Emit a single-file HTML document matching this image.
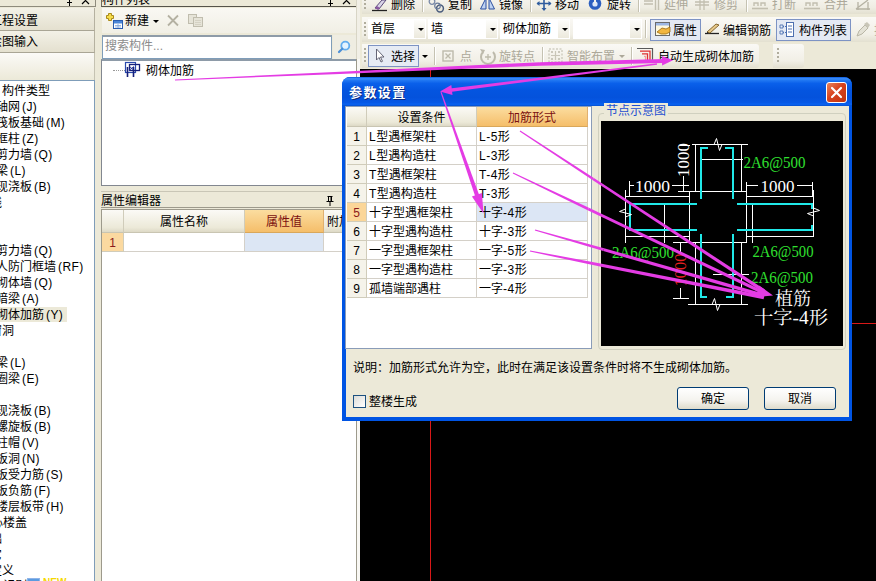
<!DOCTYPE html>
<html lang="zh-CN">
<head>
<meta charset="utf-8">
<title>参数设置</title>
<style>
html,body{margin:0;padding:0;}
body{width:876px;height:581px;overflow:hidden;position:relative;background:#ECE9D8;
 font-family:"Liberation Sans","Noto Sans CJK SC",sans-serif;font-size:12px;color:#000;line-height:16px;}
.a{position:absolute;box-sizing:border-box;white-space:nowrap;}
.t{position:absolute;white-space:nowrap;height:16px;line-height:16px;}
.g{color:#ACA899;}
/* left panel */
#lp-btn1,#lp-btn2{left:0;width:95px;background:linear-gradient(#F3F1E7,#E4E0CF);border-bottom:1px solid #A9A595;border-right:1px solid #B5B1A0;}
#tree .t{left:0;}
/* table cells */
.hd{background:linear-gradient(#FBFAF6,#ECE9D8 80%,#DDD9C6);border-right:1px solid #D0CCBA;border-bottom:1px solid #C9C5B2;text-align:center;}
.ho{background:linear-gradient(#FBDDA0,#F5BE6A);color:#7B1010;text-align:center;border-right:1px solid #E0B070;border-bottom:1px solid #D9A75A;}
.cell{border-right:1px solid #D4D0C8;border-bottom:1px solid #D4D0C8;background:#fff;padding-left:2px;line-height:20px;}
.rn{border-right:1px solid #D0CCBA;border-bottom:1px solid #D0CCBA;background:#F5F3EA;text-align:center;line-height:20px;}
.p{margin-left:2px;letter-spacing:0.4px;}
.m{letter-spacing:0.5px;}
.tb{position:absolute;white-space:nowrap;height:16px;line-height:16px;}
</style>
</head>
<body>

<!-- ================= LEFT PANEL ================= -->
<div class="a" id="lp-top" style="left:0;top:0;width:96px;height:7px;border-bottom:1px solid #8E8B7C;border-right:1px solid #8E8B7C;"></div>
<svg class="a" style="left:62px;top:0;" width="32" height="7"><path d="M7.500 0v3M5 2.500h5M7.500 3v3" stroke="#000" fill="none"/><path d="M20 -3l7 7M27 -3l-7 7" stroke="#000" stroke-width="1.200" fill="none"/></svg>
<div class="a" id="lp-btn1" style="top:8px;height:23px;"><span class="t" style="left:-10px;top:5px;">工程设置</span></div>
<div class="a" id="lp-btn2" style="top:31px;height:22px;"><span class="t" style="left:-10px;top:3px;">绘图输入</span></div>
<div class="a" id="lp-bar" style="left:0;top:53px;width:95px;height:27px;background:linear-gradient(#FBFAF7,#ECE9D8);border-right:1px solid #C5C2B2;"></div>
<div class="a" id="tree" style="left:-1px;top:80px;width:96px;height:510px;background:#fff;border:1px solid #7F9DB9;overflow:hidden;"><div class="a" style="left:0;top:2px;width:96px;height:520px;">
<span class="t" style="left:2px;top:0px;">构件类型</span>
<span class="t" style="left:-4px;top:16px;">轴网<span class="p">(J)</span></span>
<span class="t" style="left:-4px;top:32px;">筏板基础<span class="p">(M)</span></span>
<span class="t" style="left:-4px;top:48px;">框柱<span class="p">(Z)</span></span>
<span class="t" style="left:-4px;top:64px;">剪力墙<span class="p">(Q)</span></span>
<span class="t" style="left:-4px;top:80px;">梁<span class="p">(L)</span></span>
<span class="t" style="left:-4px;top:96px;">现浇板<span class="p">(B)</span></span>
<span class="t" style="left:-22px;top:112px;">轴线</span>
<span class="t" style="left:-4px;top:160px;">剪力墙<span class="p">(Q)</span></span>
<span class="t" style="left:-4px;top:176px;">人防门框墙<span class="p">(RF)</span></span>
<span class="t" style="left:-4px;top:192px;">砌体墙<span class="p">(Q)</span></span>
<span class="t" style="left:-4px;top:208px;">暗梁<span class="p">(A)</span></span>
<div class="a" style="left:0;top:224px;width:67px;height:15px;background:#ECE9D8;"></div>
<span class="t" style="left:-4px;top:224px;">砌体加筋<span class="p">(Y)</span></span>
<span class="t" style="left:-22px;top:240px;">门窗洞</span>
<span class="t" style="left:-4px;top:272px;">梁<span class="p">(L)</span></span>
<span class="t" style="left:-4px;top:288px;">圈梁<span class="p">(E)</span></span>
<span class="t" style="left:-4px;top:320px;">现浇板<span class="p">(B)</span></span>
<span class="t" style="left:-4px;top:336px;">螺旋板<span class="p">(B)</span></span>
<span class="t" style="left:-4px;top:352px;">柱帽<span class="p">(V)</span></span>
<span class="t" style="left:-4px;top:368px;">板洞<span class="p">(N)</span></span>
<span class="t" style="left:-4px;top:384px;">板受力筋<span class="p">(S)</span></span>
<span class="t" style="left:-4px;top:400px;">板负筋<span class="p">(F)</span></span>
<span class="t" style="left:-4px;top:416px;">楼层板带<span class="p">(H)</span></span>
<span class="t" style="left:-21px;top:432px;">空心楼盖</span>
<span class="t" style="left:-22px;top:448px;">基础</span>
<span class="t" style="left:-22px;top:464px;">其它</span>
<span class="t" style="left:-22px;top:480px;">自定义</span>
<span class="t" style="left:-22px;top:495px;">CAD识别</span>
<div class="a" style="left:27px;top:495px;width:13px;height:12px;background:#5B9BE0;border:1px solid #8FB4E8;"></div>
<span class="t" style="left:43px;top:492px;font-size:10px;font-weight:bold;color:#F5D800;">NEW</span>
</div></div>

<!-- ================= MIDDLE PANEL ================= -->
<div class="a" id="mp" style="left:100px;top:0;width:258px;height:581px;">
 <!-- title strip -->
 <div class="a" style="left:1px;top:-10px;width:256px;height:17px;border:1px solid #6E6C60;border-bottom:1px solid #55534A;"></div>
 <span class="t" style="left:2px;top:-8px;">构件列表</span>
 <svg class="a" style="left:226px;top:0;" width="30" height="7"><path d="M4.5 0v4M2 3.5h5M4.5 4v2" stroke="#000" fill="none"/><path d="M17 -3l7 7M24 -3l-7 7" stroke="#000" stroke-width="1.2" fill="none"/></svg>
 <!-- toolbar -->
 <div class="a" style="left:2px;top:8px;width:255px;height:25px;background:linear-gradient(#F9F8F3,#F1EFE5);"></div>
 <svg class="a" style="left:5px;top:12px;" width="18" height="17">
  <path d="M3.5 1.5h3v2h2v3h-2v2h-3v-2h-2v-3h2z" fill="#F6DC4A" stroke="#A88A1C" stroke-width="1"/>
  <rect x="8.5" y="8.5" width="9" height="8" fill="#fff" stroke="#2A5DB0"/><rect x="9" y="9" width="8" height="2.5" fill="#4A86D8"/>
  <path d="M10 13.5h6M10 15h6M13 12v4" stroke="#7FA6DD" stroke-width="0.8"/>
 </svg>
 <span class="t" style="left:25px;top:13px;">新建</span>
 <svg class="a" style="left:53px;top:20px;" width="6" height="3"><path d="M0 0h6L3 3z" fill="#000"/></svg>
 <svg class="a" style="left:66px;top:14px;" width="14" height="14"><path d="M2 1.500l10 10M12 1.500l-10 10" stroke="#B4B1A2" stroke-width="1.800" fill="none"/></svg>
 <svg class="a" style="left:87px;top:13px;" width="17" height="15"><rect x="1.5" y="1.5" width="8" height="9" fill="#E6E4D8" stroke="#C0BDAE"/><rect x="6.5" y="4.5" width="9" height="9" fill="#E6E4D8" stroke="#C0BDAE"/><path d="M8 7.5h6M8 9.5h6M8 11.5h6" stroke="#CFCCBE" stroke-width="0.8"/></svg>
 <!-- search -->
 <div class="a" style="left:2px;top:35px;width:230px;height:24px;background:#fff;border:1px solid #7F9DB9;border-top:2px solid #8E9BA8;"></div>
 <span class="t" style="left:5px;top:38px;color:#8C8C8C;">搜索构件...</span>
 <div class="a" style="left:233px;top:35px;width:23px;height:24px;background:#EFEDE2;"></div>
 <svg class="a" style="left:236px;top:38px;" width="18" height="18"><circle cx="9.300" cy="7.700" r="4" fill="#E4F3FF" stroke="#62ACEE" stroke-width="1.800"/><path d="M6.300 10.700l-3.300 3.300" stroke="#4C8FD6" stroke-width="2.200" stroke-linecap="round"/></svg>
 <!-- list -->
 <div class="a" style="left:1px;top:59px;width:257px;height:127px;background:#fff;border:1px solid #828790;border-top:2px solid #8E9BA8;"></div>
 <div class="a" style="left:13px;top:70px;width:12px;height:0;border-top:1px dotted #9A9A9A;"></div>
 <svg class="a" style="left:24px;top:61px;" width="18" height="18">
  <rect x="1.500" y="1.500" width="10" height="10" fill="none" stroke="#2A4AAE" stroke-width="1.200"/>
  <rect x="5.500" y="3.500" width="10" height="6" fill="none" stroke="#16207A" stroke-width="1.300"/>
  <path d="M3.500 6v10M9.500 6v10" stroke="#16207A" stroke-width="1.600" fill="none"/>
  <path d="M5 9.500l5-4M5.500 5.500l3.500 3" stroke="#2A3A9A" stroke-width="1" fill="none"/>
 </svg>
 <span class="t" style="left:46px;top:63px;">砌体加筋</span>
 <!-- property editor title -->
 <span class="t" style="left:1px;top:193px;">属性编辑器</span>
 <svg class="a" style="left:225px;top:195px;" width="10" height="12"><path d="M2.5 1.5h5M3.5 1.5v5M6.5 1.5v5M1.5 6.5h7M5 7v4" stroke="#000" fill="none"/><rect x="5.5" y="2" width="1" height="4" fill="#000"/></svg>
 <div class="a" style="left:1px;top:191px;width:257px;height:1px;background:#C9C6B6;"></div>
 <div class="a" style="left:1px;top:207px;width:257px;height:1px;background:#9D9A8C;"></div>
 <!-- property table -->
 <div class="a" style="left:1px;top:209px;width:257px;height:380px;background:#fff;border:1px solid #9D9A8C;"></div>
 <div class="a hd" style="left:2px;top:210px;width:22px;height:23px;"></div>
 <div class="a hd" style="left:24px;top:210px;width:121px;height:23px;line-height:25px;">属性名称</div>
 <div class="a ho" style="left:145px;top:210px;width:79px;height:23px;line-height:25px;">属性值</div>
 <div class="a hd" style="left:224px;top:210px;width:40px;height:23px;line-height:25px;text-align:left;padding-left:3px;">附加</div>
 <div class="a rn" style="left:2px;top:233px;width:22px;height:19px;background:#FBD9A0;color:#8B1A1A;">1</div>
 <div class="a cell" style="left:24px;top:233px;width:121px;height:19px;"></div>
 <div class="a cell" style="left:145px;top:233px;width:79px;height:19px;background:#DCE6F4;"></div>
 <div class="a cell" style="left:224px;top:233px;width:40px;height:19px;"></div>
</div>
<div class="a" style="left:356px;top:0;width:4px;height:69px;background:#F1EFE6;border-left:1px solid #D8D5C6;"></div>
<div class="a" style="left:356px;top:59px;width:4px;height:522px;background:#F8F7F3;border-left:1px solid #9D9A8C;"></div>

<!-- ================= RIGHT AREA ================= -->
<!-- toolbars -->
<div class="a" style="left:362px;top:-8px;width:514px;height:22px;background:linear-gradient(#FAF9F5,#EFEDE3 70%,#E3E0D0);"></div>
<div class="a" style="left:362px;top:17px;width:514px;height:25px;background:linear-gradient(#FAF9F5,#F1EFE6 70%,#E3E0D0);"></div>
<div class="a" style="left:362px;top:44px;width:397px;height:24px;background:linear-gradient(#FAF9F5,#F1EFE6 70%,#E3E0D0);border-radius:0 3px 3px 0;"></div>
<div class="a" style="left:773px;top:44px;width:31px;height:24px;background:linear-gradient(#FAF9F5,#F1EFE6 70%,#E3E0D0);border-radius:0 3px 3px 0;"></div>
<span class="t " style="left:391px;top:-3px;">删除</span>
<span class="t " style="left:448px;top:-3px;">复制</span>
<span class="t " style="left:499px;top:-3px;">镜像</span>
<span class="t " style="left:555px;top:-3px;">移动</span>
<span class="t " style="left:607px;top:-3px;">旋转</span>
<span class="t g" style="left:664px;top:-3px;">延伸</span>
<span class="t g" style="left:714px;top:-3px;">修剪</span>
<span class="t g" style="left:772px;top:-3px;">打断</span>
<span class="t g" style="left:824px;top:-3px;">合并</span>
<div class="a" style="left:422px;top:-4px;width:1px;height:16px;background:#C5C2B2;box-shadow:1px 0 0 #fff;"></div>
<div class="a" style="left:530px;top:-4px;width:1px;height:16px;background:#C5C2B2;box-shadow:1px 0 0 #fff;"></div>
<div class="a" style="left:638px;top:-4px;width:1px;height:16px;background:#C5C2B2;box-shadow:1px 0 0 #fff;"></div>
<div class="a" style="left:746px;top:-4px;width:1px;height:16px;background:#C5C2B2;box-shadow:1px 0 0 #fff;"></div>
<svg class="a" style="left:370px;top:0;" width="18" height="12"><path d="M2 10.5h15" stroke="#222" stroke-width="1.3"/><path d="M5 8l7-8h4l-7 9z" fill="#D9D4E8" stroke="#5A4A7A"/><path d="M5 8l2-2 3 2-2 2z" fill="#8A5AA0"/></svg>
<svg class="a" style="left:427px;top:0;" width="19" height="14"><circle cx="5" cy="1.500" r="2.800" fill="none" stroke="#7A8AA8" stroke-width="1.300"/><circle cx="13" cy="8.500" r="3.400" fill="none" stroke="#4A5C7C" stroke-width="1.500"/><circle cx="10.500" cy="6" r="2.800" fill="none" stroke="#6A7C9C" stroke-width="1.200"/></svg>
<svg class="a" style="left:479px;top:0;" width="18" height="12"><path d="M7 -2v11H1.5z" fill="#BFD3F2" stroke="#2B4FA0"/><path d="M10 -2v11h5.5z" fill="#BFD3F2" stroke="#2B4FA0"/></svg>
<svg class="a" style="left:536px;top:0;" width="16" height="12"><path d="M8 -3v13M1 3.5h14" stroke="#2F5C9E" stroke-width="1.6"/><path d="M8 11l-2.5-3h5zM0.500 3.500l3-2.500v5zM15.500 3.500l-3-2.500v5z" fill="#2F5C9E"/></svg>
<svg class="a" style="left:588px;top:0;" width="15" height="12"><circle cx="7" cy="3.500" r="6.300" fill="#2C5FC0"/><circle cx="7" cy="4" r="2.600" fill="#DCE8FA"/><rect x="6" y="-3" width="2" height="6" fill="#F4F2EA"/></svg>
<svg class="a" style="left:643px;top:0;" width="18" height="12"><path d="M1 1h9M1 4h9" stroke="#C2BFB0" stroke-width="1.4"/><path d="M12.500 -2v12M15.500 -2v12" stroke="#C2BFB0" stroke-width="1.4"/></svg>
<svg class="a" style="left:695px;top:0;" width="16" height="12"><path d="M5 -2v12M9 -2v12M0 2h14M0 5h14" stroke="#C2BFB0" stroke-width="1.3"/></svg>
<svg class="a" style="left:751px;top:0;" width="18" height="12"><path d="M1 8.500h16" stroke="#C2BFB0" stroke-width="1.6"/><path d="M3 6v-3h4v3M10 6v-3h4v3" stroke="#C2BFB0" stroke-width="1.4" fill="none"/></svg>
<svg class="a" style="left:803px;top:0;" width="18" height="12"><path d="M1 8.500h16" stroke="#C2BFB0" stroke-width="1.6"/><path d="M3 6v-3h4v3M10 6v-3h4v3" stroke="#C2BFB0" stroke-width="1.4" fill="none"/></svg>
<svg class="a" style="left:854px;top:0;" width="22" height="12"><path d="M2 9l12-9M2 9h14M4 2v8M14 2v8" stroke="#B5B2A3" stroke-width="1.3" fill="none"/></svg>
<div class="a" style="left:364px;top:-5px;width:2px;height:16px;background:repeating-linear-gradient(#B0AD9D 0 2px,transparent 2px 4px);"></div>
<div class="a" style="left:364px;top:22px;width:2px;height:16px;background:repeating-linear-gradient(#B0AD9D 0 2px,transparent 2px 4px);"></div>
<div class="a" style="left:364px;top:48px;width:2px;height:16px;background:repeating-linear-gradient(#B0AD9D 0 2px,transparent 2px 4px);"></div>
<div class="a" style="left:777px;top:48px;width:2px;height:16px;background:repeating-linear-gradient(#B0AD9D 0 2px,transparent 2px 4px);"></div>
<div class="a" style="left:368px;top:19px;width:58px;height:20px;background:#fff;"></div>
<div class="a" style="left:414px;top:20px;width:11px;height:18px;background:linear-gradient(#FDFDFB,#ECE9DC);"></div>
<span class="t" style="left:371px;top:21px;">首层</span>
<svg class="a" style="left:418px;top:28px;" width="6" height="3"><path d="M0 0h6L3 3z" fill="#000"/></svg>
<div class="a" style="left:428px;top:19px;width:70px;height:20px;background:#fff;"></div>
<div class="a" style="left:486px;top:20px;width:11px;height:18px;background:linear-gradient(#FDFDFB,#ECE9DC);"></div>
<span class="t" style="left:431px;top:21px;">墙</span>
<svg class="a" style="left:490px;top:28px;" width="6" height="3"><path d="M0 0h6L3 3z" fill="#000"/></svg>
<div class="a" style="left:500px;top:19px;width:70px;height:20px;background:#fff;"></div>
<div class="a" style="left:558px;top:20px;width:11px;height:18px;background:linear-gradient(#FDFDFB,#ECE9DC);"></div>
<span class="t" style="left:503px;top:21px;">砌体加筋</span>
<svg class="a" style="left:562px;top:28px;" width="6" height="3"><path d="M0 0h6L3 3z" fill="#000"/></svg>
<div class="a" style="left:573px;top:19px;width:69px;height:20px;background:#fff;"></div>
<div class="a" style="left:630px;top:20px;width:11px;height:18px;background:linear-gradient(#FDFDFB,#ECE9DC);"></div>
<svg class="a" style="left:634px;top:28px;" width="6" height="3"><path d="M0 0h6L3 3z" fill="#000"/></svg>
<div class="a" style="left:645px;top:20px;width:1px;height:18px;background:#C5C2B2;box-shadow:1px 0 0 #fff;"></div>
<div class="a" style="left:650px;top:19px;width:51px;height:22px;background:#E4E9F3;border:1px solid #7D93C4;"></div>
<svg class="a" style="left:654px;top:21px;" width="18" height="17"><rect x="1.500" y="1.500" width="14" height="13" fill="#FFF8DC" stroke="#6B6B6B"/><rect x="2" y="2" width="13" height="2.500" fill="#9DB7E4"/><path d="M3 11l5-4 4 1 4-2v5l-4 2-5 0z" fill="#F2B640" stroke="#9A6A10" stroke-width="0.800"/></svg>
<span class="t" style="left:673px;top:23px;">属性</span>
<svg class="a" style="left:704px;top:21px;" width="18" height="17"><path d="M1 12.500h14" stroke="#222" stroke-width="1.300"/><path d="M3 11l9-8 3 1-9 8z" fill="#E7C98A" stroke="#7A5A20" stroke-width="0.900"/><path d="M3 11l2 2" stroke="#333"/></svg>
<span class="t" style="left:723px;top:23px;">编辑钢筋</span>
<div class="a" style="left:776px;top:19px;width:75px;height:22px;background:#E4E9F3;border:1px solid #7D93C4;"></div>
<svg class="a" style="left:779px;top:21px;" width="17" height="17"><rect x="7.500" y="1.500" width="7" height="14" fill="#fff" stroke="#4D6FB0"/><path d="M9 5h4M9 8h4M9 11h4" stroke="#4D6FB0"/><path d="M1 4h3v3h-3zM1 10h3v3h-3z" fill="#E9EEF8" stroke="#4D6FB0" stroke-width="0.900"/><path d="M4 5.500h3M4 11.500h3" stroke="#4D6FB0" stroke-dasharray="1 1"/></svg>
<span class="t" style="left:799px;top:23px;">构件列表</span>
<svg class="a" style="left:855px;top:21px;" width="16" height="17"><path d="M2 15l2-5 6-6 3 3-6 6z" fill="#E4E2D6" stroke="#B9B6A6"/><path d="M9 3l3-2 3 3-2 3z" fill="#C9C6B8"/></svg>
<span class="t g" style="left:874px;top:23px;">拾取</span>
<div class="a" style="left:368px;top:45px;width:51px;height:22px;background:#E6EBF4;border:1px solid #7D93C4;"></div>
<svg class="a" style="left:375px;top:48px;" width="10" height="16"><path d="M1.500 1v11l2.500-2.500 2 4.500 1.500-0.700-2-4.300h3.500z" fill="#fff" stroke="#556" stroke-width="0.900"/></svg>
<span class="t" style="left:391px;top:49px;">选择</span>
<svg class="a" style="left:422px;top:55px;" width="6" height="3"><path d="M0 0h6L3 3z" fill="#000"/></svg>
<div class="a" style="left:434px;top:47px;width:1px;height:18px;background:#C5C2B2;box-shadow:1px 0 0 #fff;"></div>
<svg class="a" style="left:442px;top:50px;" width="12" height="12"><rect x="1" y="1" width="10" height="10" fill="none" stroke="#BDBAAB" stroke-width="1.400"/><path d="M3.500 3.500l5 5M8.500 3.500l-5 5" stroke="#BDBAAB" stroke-width="1.300"/></svg>
<span class="t g" style="left:460px;top:49px;">点</span>
<svg class="a" style="left:479px;top:47px;" width="18" height="18"><path d="M4 5a7 7 0 1 0 10 0" fill="none" stroke="#BDBAAB" stroke-width="2"/><path d="M1 2l5 1-2 4z" fill="#BDBAAB"/><path d="M9 7v6M6 10h6" stroke="#BDBAAB" stroke-width="1.300"/></svg>
<span class="t g" style="left:499px;top:49px;">旋转点</span>
<div class="a" style="left:542px;top:47px;width:1px;height:18px;background:#C5C2B2;box-shadow:1px 0 0 #fff;"></div>
<svg class="a" style="left:548px;top:48px;" width="16" height="16"><rect x="1" y="1" width="13" height="13" fill="none" stroke="#BDBAAB" stroke-dasharray="2 1.500"/><path d="M7.500 3v9M3 7.500h9" stroke="#C9C6B8" stroke-width="1.200"/><circle cx="4" cy="4" r="1" fill="#BDBAAB"/><circle cx="11" cy="4" r="1" fill="#BDBAAB"/><circle cx="4" cy="11" r="1" fill="#BDBAAB"/><circle cx="11" cy="11" r="1" fill="#BDBAAB"/></svg>
<span class="t g" style="left:567px;top:49px;">智能布置</span>
<svg class="a" style="left:619px;top:55px;" width="6" height="3"><path d="M0 0h6L3 3z" fill="#ACA899"/></svg>
<div class="a" style="left:631px;top:47px;width:1px;height:18px;background:#C5C2B2;box-shadow:1px 0 0 #fff;"></div>
<svg class="a" style="left:637px;top:47px;" width="18" height="16"><path d="M0 1.500h15.500v12" fill="none" stroke="#5A5A5A" stroke-width="1.200"/><path d="M3 4.200h10v9.500" fill="none" stroke="#E03030" stroke-width="1.300"/><path d="M5 6.800h5.500v7" fill="none" stroke="#E03030" stroke-width="1.300"/><path d="M7 9.300h1.500v4.500" fill="none" stroke="#F0A0A0" stroke-width="1.200"/></svg>
<span class="t" style="left:658px;top:49px;">自动生成砌体加筋</span>
<div class="a" id="canvas" style="left:360px;top:69px;width:516px;height:512px;background:#000;"></div>
<div class="a" style="left:430px;top:69px;width:1px;height:512px;background:#D81818;"></div>
<div class="a" style="left:851px;top:323px;width:25px;height:1px;background:#D81818;"></div>

<!-- ================= DIALOG ================= -->
<div class="a" id="dlg" style="left:342px;top:77px;width:510px;height:344px;background:#0054E3;border-radius:8px 8px 0 0;">
 <div class="a" style="left:0;top:0;width:510px;height:29px;border-radius:8px 8px 0 0;background:linear-gradient(#0A5BE0 0%,#3C8DF8 6%,#1F76F2 12%,#0A60EA 22%,#0455E0 45%,#0452DC 70%,#0658E6 88%,#0A62F0 94%,#0450D0 100%);"></div>
 <span class="t" style="left:7px;top:8px;color:#fff;font-weight:bold;font-size:13px;letter-spacing:1.4px;text-shadow:1px 1px 0 #0A2A80;">参数设置</span>
 <div class="a" style="left:484px;top:5px;width:21px;height:21px;border:1px solid #fff;border-radius:3px;background:linear-gradient(135deg,#E8845C,#D8431E 45%,#C03410);"></div>
 <svg class="a" style="left:484px;top:5px;" width="21" height="21"><path d="M6 6l9 9M15 6l-9 9" stroke="#fff" stroke-width="2.2" stroke-linecap="round"/></svg>
 <div class="a" style="left:4px;top:29px;width:503px;height:311px;background:#ECE9D8;"></div>
 <div class="a" style="left:3px;top:29px;width:247px;height:243px;background:#fff;border:1px solid #8A9CB8;"></div>
 <div class="a hd" style="left:5px;top:30px;width:20px;height:20px;"></div>
 <div class="a hd" style="left:25px;top:30px;width:110px;height:20px;line-height:22px;">设置条件</div>
 <div class="a ho" style="left:135px;top:30px;width:111px;height:20px;line-height:22px;">加筋形式</div>
 <div class="a rn" style="left:5px;top:50px;width:20px;height:19px;">1</div>
 <div class="a cell" style="left:25px;top:50px;width:110px;height:19px;"><span class="m">L</span>型遇框架柱</div>
 <div class="a cell" style="left:135px;top:50px;width:111px;height:19px;"><span class="m">L-5</span>形</div>
 <div class="a rn" style="left:5px;top:69px;width:20px;height:19px;">2</div>
 <div class="a cell" style="left:25px;top:69px;width:110px;height:19px;"><span class="m">L</span>型遇构造柱</div>
 <div class="a cell" style="left:135px;top:69px;width:111px;height:19px;"><span class="m">L-3</span>形</div>
 <div class="a rn" style="left:5px;top:88px;width:20px;height:19px;">3</div>
 <div class="a cell" style="left:25px;top:88px;width:110px;height:19px;"><span class="m">T</span>型遇框架柱</div>
 <div class="a cell" style="left:135px;top:88px;width:111px;height:19px;"><span class="m">T-4</span>形</div>
 <div class="a rn" style="left:5px;top:107px;width:20px;height:19px;">4</div>
 <div class="a cell" style="left:25px;top:107px;width:110px;height:19px;"><span class="m">T</span>型遇构造柱</div>
 <div class="a cell" style="left:135px;top:107px;width:111px;height:19px;"><span class="m">T-3</span>形</div>
 <div class="a rn" style="left:5px;top:126px;width:20px;height:19px;background:#FBD698;color:#8B1A1A;">5</div>
 <div class="a cell" style="left:25px;top:126px;width:110px;height:19px;">十字型遇框架柱</div>
 <div class="a cell" style="left:135px;top:126px;width:111px;height:19px;background:#DCE6F5;">十字<span class="m">-4</span>形</div>
 <div class="a rn" style="left:5px;top:145px;width:20px;height:19px;">6</div>
 <div class="a cell" style="left:25px;top:145px;width:110px;height:19px;">十字型遇构造柱</div>
 <div class="a cell" style="left:135px;top:145px;width:111px;height:19px;">十字<span class="m">-3</span>形</div>
 <div class="a rn" style="left:5px;top:164px;width:20px;height:19px;">7</div>
 <div class="a cell" style="left:25px;top:164px;width:110px;height:19px;">一字型遇框架柱</div>
 <div class="a cell" style="left:135px;top:164px;width:111px;height:19px;">一字<span class="m">-5</span>形</div>
 <div class="a rn" style="left:5px;top:183px;width:20px;height:19px;">8</div>
 <div class="a cell" style="left:25px;top:183px;width:110px;height:19px;">一字型遇构造柱</div>
 <div class="a cell" style="left:135px;top:183px;width:111px;height:19px;">一字<span class="m">-3</span>形</div>
 <div class="a rn" style="left:5px;top:202px;width:20px;height:19px;">9</div>
 <div class="a cell" style="left:25px;top:202px;width:110px;height:19px;">孤墙端部遇柱</div>
 <div class="a cell" style="left:135px;top:202px;width:111px;height:19px;">一字<span class="m">-4</span>形</div>
 <div class="a" style="left:256px;top:36px;width:248px;height:237px;border:1px solid #D0D0BF;border-radius:4px;"></div>
 <span class="t" style="left:262px;top:26px;color:#1E4FD0;background:#ECE9D8;padding:0 2px;">节点示意图</span>
 <div class="a" id="pic" style="left:259px;top:44px;width:242px;height:225px;background:#000;overflow:hidden;">
<svg width="242" height="225" viewBox="601 121 242 225" style="position:absolute;left:0;top:0;" shape-rendering="crispEdges">
<rect x="689.5" y="191.5" width="57" height="51" stroke="#fff" stroke-width="1" fill="none"/>
<path d="M692 144.500H748M695.500 144.500V191M741.500 144.500V191M701 159.500H743" stroke="#fff" stroke-width="1" fill="none"/>
<path d="M688 304.500H748M695.500 243V304M741.500 243V304M713 274.500H749" stroke="#fff" stroke-width="1" fill="none"/>
<path d="M625.500 196.500H689M625.500 236.500H689M625.500 190V243M664.500 204V243" stroke="#fff" stroke-width="1" fill="none"/>
<path d="M747 196.500H813.500M747 236.500H813.500M813.500 190V237M752.500 204V243" stroke="#fff" stroke-width="1" fill="none"/>
<path d="M708 148H701V199M725 148H733V199" stroke="#20E8E8" stroke-width="2" fill="none"/>
<path d="M707 297H701V234M726 297H733V234" stroke="#20E8E8" stroke-width="2" fill="none"/>
<path d="M697 204H630V230H697" stroke="#20E8E8" stroke-width="2" fill="none"/>
<path d="M737 204H812V209M737 230H812V225" stroke="#20E8E8" stroke-width="2" fill="none"/>
<path d="M710 144.500h4l2.500-6 3 12 2.500-6h4" stroke="#fff" stroke-width="1" fill="none" shape-rendering="auto"/>
<path d="M708 304.500h4l2.500-6 3 12 2.500-6h4" stroke="#fff" stroke-width="1" fill="none" shape-rendering="auto"/>
<path d="M625.500 205v4l-6 2.500 12 3-6 2.500v4" stroke="#fff" stroke-width="1" fill="none" shape-rendering="auto"/>
<path d="M813.500 204v4l6 2.500-12 3 6 2.500v4" stroke="#fff" stroke-width="1" fill="none" shape-rendering="auto"/>
<path d="M629.500 181V196M629.500 185.500H634M672 185.500H689M683.500 176V191M678 191.500H689M680 145.500H690" stroke="#fff" stroke-width="1" fill="none"/>
<path d="M746.500 182V196M746.500 185.500H758M797 185.500H812M812.500 182V196" stroke="#fff" stroke-width="1" fill="none"/>
<path d="M673 242.500H689M673 298.500H689M680.500 243V252M680.500 288V298" stroke="#fff" stroke-width="1" fill="none"/>
<text x="635" y="191.500" font-size="16.5" fill="#fff" font-family="Liberation Serif,serif" textLength="35" lengthAdjust="spacingAndGlyphs">1000</text>
<text x="760.500" y="191.500" font-size="16.5" fill="#fff" font-family="Liberation Serif,serif" textLength="34" lengthAdjust="spacingAndGlyphs">1000</text>
<text transform="translate(688.500 177) rotate(-90)" font-size="16.5" fill="#fff" font-family="Liberation Serif,serif" textLength="34" lengthAdjust="spacingAndGlyphs">1000</text>
<text transform="translate(686 286.500) rotate(-90)" font-size="16.5" fill="#E82020" font-family="Liberation Serif,serif" textLength="33" lengthAdjust="spacingAndGlyphs">1000</text>
<text x="743.500" y="167.500" fill="#30E030" font-size="16" font-family="Liberation Serif,serif" textLength="62" lengthAdjust="spacingAndGlyphs">2A6@500</text>
<text x="612" y="258" fill="#30E030" font-size="16" font-family="Liberation Serif,serif" textLength="62" lengthAdjust="spacingAndGlyphs">2A6@500</text>
<text x="752.500" y="257" fill="#30E030" font-size="16" font-family="Liberation Serif,serif" textLength="61" lengthAdjust="spacingAndGlyphs">2A6@500</text>
<text x="751" y="283" fill="#30E030" font-size="16" font-family="Liberation Serif,serif" textLength="62" lengthAdjust="spacingAndGlyphs">2A6@500</text>
<text x="775" y="304.500" font-size="18" fill="#fff" font-family="Liberation Serif,Noto Serif CJK SC,serif">植筋</text>
<text x="754" y="323.500" font-size="18" fill="#fff" font-family="Liberation Serif,Noto Serif CJK SC,serif" textLength="74" lengthAdjust="spacingAndGlyphs">十字-4形</text>
</svg>
</div>
 <span class="t" style="left:11px;top:283px;">说明：加筋形式允许为空，此时在满足该设置条件时将不生成砌体加筋。</span>
 <div class="a" style="left:11px;top:318px;width:13px;height:13px;border:1px solid #1C5180;background:linear-gradient(135deg,#DCDCD7,#fff);"></div>
 <span class="t" style="left:27px;top:317px;">整楼生成</span>
 <div class="a" style="left:335px;top:310px;width:72px;height:23px;border:1px solid #003C74;border-radius:3px;background:linear-gradient(#fff,#F4F3EE 60%,#DEDBCB);text-align:center;line-height:23px;">确定</div>
 <div class="a" style="left:422px;top:310px;width:72px;height:23px;border:1px solid #003C74;border-radius:3px;background:linear-gradient(#fff,#F4F3EE 60%,#DEDBCB);text-align:center;line-height:23px;">取消</div>
</div>

<!-- ================= ARROWS ================= -->
<svg class="a" id="arrows" style="left:0;top:0;" width="876" height="581">
<polygon points="175.0,80.5 340.0,73.9 340.0,71.7 175.0,79.5" fill="#E43CE4"/>
<polygon points="340.0,73.9 540.1,65.8 539.9,62.2 340.0,71.7" fill="#E43CE4"/>
<polygon points="540.0,65.8 664.1,63.1 663.9,58.9 540.0,62.2" fill="#E43CE4"/>
<polygon points="673.0,60.3 662.1,65.4 661.9,55.9" fill="#E43CE4"/>
<polygon points="656.9,63.3 449.8,88.5 450.2,91.9 657.1,64.7" fill="#E43CE4"/>
<polygon points="440.0,91.5 451.3,85.0 452.5,95.0" fill="#E43CE4"/>
<polygon points="440.5,92.2 476.0,198.7 480.0,197.3 441.5,91.8" fill="#E43CE4"/>
<polygon points="483.5,213.5 471.9,196.4 481.9,192.9" fill="#E43CE4"/>
<polygon points="519.7,131.4 592.5,180.1 593.9,177.9 520.3,130.6" fill="#E43CE4"/>
<polygon points="592.5,180.1 763.1,292.4 764.9,289.6 593.9,177.9" fill="#E43CE4"/>
<polygon points="512.8,173.5 587.7,210.3 588.9,207.7 513.2,172.5" fill="#E43CE4"/>
<polygon points="587.7,210.3 763.3,294.5 764.7,291.5 588.9,207.7" fill="#E43CE4"/>
<polygon points="534.8,230.6 603.3,251.1 604.1,248.2 535.2,229.4" fill="#E43CE4"/>
<polygon points="603.3,251.1 763.5,297.2 764.5,293.8 604.1,248.2" fill="#E43CE4"/>
<polygon points="529.9,251.6 599.9,266.4 600.5,263.5 530.1,250.4" fill="#E43CE4"/>
<polygon points="599.9,266.4 763.6,299.3 764.4,295.7 600.5,263.5" fill="#E43CE4"/>
<polygon points="773.0,295.5 756.0,297.0 759.2,285.4" fill="#E43CE4"/>
</svg>

</body>
</html>
